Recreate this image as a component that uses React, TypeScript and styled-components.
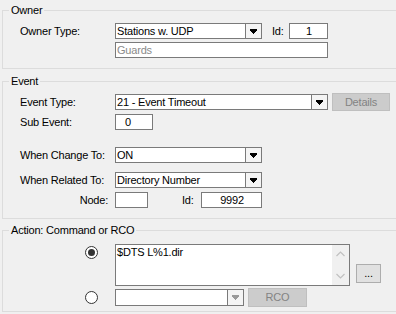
import React from 'react';
import styled, { createGlobalStyle } from 'styled-components';

const Global = createGlobalStyle`
  html, body { margin: 0; padding: 0; background: #f0f0f0; }
  body {
    width: 396px; height: 314px; overflow: hidden;
    font-family: "Liberation Sans", Arial, sans-serif;
    font-size: 11px; color: #000;
    letter-spacing: -0.2px;
  }
`;

const Page = styled.div`
  display: flex;
  flex-direction: column;
  padding: 4px 0 0 2px;
  width: 398px;
`;

const Group = styled.fieldset<{ $mt?: number }>`
  margin: ${p => p.$mt ?? 0}px 0 0 0;
  padding: 0;
  border: 1px solid #dcdcdc;
  min-width: 0;
`;

const Legend = styled.legend`
  margin-left: 6px;
  padding: 0 2px;
  line-height: 13px;
  height: 13px;
`;

const Body = styled.div<{ $pt: number; $pb: number }>`
  display: flex;
  flex-direction: column;
  padding: ${p => p.$pt}px 0 ${p => p.$pb}px 17px;
`;

const Row = styled.div<{ $mt?: number; $h?: number; $align?: string }>`
  display: flex;
  align-items: ${p => p.$align ?? 'center'};
  height: ${p => p.$h ?? 16}px;
  margin-top: ${p => p.$mt ?? 0}px;
`;

const Label = styled.div<{ $w?: number; $right?: boolean; $pr?: number; $ml?: number }>`
  flex: none;
  box-sizing: border-box;
  width: ${p => p.$w ?? 95}px;
  margin-left: ${p => p.$ml ?? 0}px;
  padding-right: ${p => p.$pr ?? 0}px;
  text-align: ${p => (p.$right ? 'right' : 'left')};
  line-height: 13px;
  white-space: nowrap;
`;

const TextBox = styled.div<{ $w: number; $center?: boolean; $pl?: number; $muted?: boolean }>`
  flex: none;
  box-sizing: border-box;
  width: ${p => p.$w}px;
  height: 16px;
  border: 1px solid #7a7a7a;
  background: #fff;
  padding-left: ${p => p.$pl ?? 1}px;
  line-height: 14px;
  text-align: ${p => (p.$center ? 'center' : 'left')};
  color: ${p => (p.$muted ? '#8a8a8a' : '#000')};
  white-space: nowrap;
  overflow: hidden;
`;

const ComboBox = styled.div<{ $w: number; $h?: number }>`
  flex: none;
  box-sizing: border-box;
  width: ${p => p.$w}px;
  height: ${p => p.$h ?? 16}px;
  border: 1px solid #7a7a7a;
  background: #fff;
  display: flex;
`;

const ComboValue = styled.div`
  flex: 1;
  padding-left: 1px;
  line-height: 14px;
  white-space: nowrap;
  overflow: hidden;
`;

const DropButton = styled.div<{ $disabled?: boolean }>`
  flex: none;
  width: 15px;
  border-left: 1px solid #7a7a7a;
  background: #f4f4f4;
  display: flex;
  align-items: center;
  justify-content: center;
`;

const PushButton = styled.div<{ $w: number; $h?: number; $ml?: number; $mt?: number; $disabled?: boolean }>`
  flex: none;
  box-sizing: border-box;
  width: ${p => p.$w}px;
  height: ${p => p.$h ?? 19}px;
  margin-left: ${p => p.$ml ?? 0}px;
  margin-top: ${p => p.$mt ?? 0}px;
  border: 1px solid ${p => (p.$disabled ? '#bfbfbf' : '#adadad')};
  background: ${p => (p.$disabled ? '#cccccc' : '#e1e1e1')};
  color: ${p => (p.$disabled ? '#838383' : '#000')};
  display: flex;
  align-items: center;
  justify-content: center;
  line-height: 13px;
`;

const RadioCell = styled.div<{ $pt?: number }>`
  flex: none;
  width: 95px;
  box-sizing: border-box;
  display: flex;
  justify-content: flex-end;
  padding-right: 17px;
  padding-top: ${p => p.$pt ?? 0}px;
`;

const Radio = styled.div<{ $checked?: boolean }>`
  width: 13px;
  height: 13px;
  box-sizing: border-box;
  border-radius: 50%;
  border: 1px solid #333;
  background: #fff;
  display: flex;
  align-items: center;
  justify-content: center;
  &::after {
    content: '';
    display: ${p => (p.$checked ? 'block' : 'none')};
    width: 7px;
    height: 7px;
    border-radius: 50%;
    background: #333;
  }
`;

const MemoBox = styled.div`
  flex: none;
  box-sizing: border-box;
  width: 235px;
  height: 42px;
  border: 1px solid #7a7a7a;
  background: #fff;
  display: flex;
`;

const MemoText = styled.div`
  flex: 1;
  padding: 1px 0 0 1px;
  line-height: 13px;
`;

const ScrollBar = styled.div`
  flex: none;
  width: 17px;
  background: #f0f0f0;
  display: flex;
  flex-direction: column;
  justify-content: space-between;
  align-items: center;
  padding: 6px 0 6px;
  box-sizing: border-box;
`;

const Arrow = ({ color }: { color: string }) => (
  <svg width="7" height="5" viewBox="0 0 7 5" shapeRendering="crispEdges">
    <rect x="0" y="0" width="7" height="1" fill={color} />
    <rect x="0" y="1" width="7" height="1" fill={color} />
    <rect x="1" y="2" width="5" height="1" fill={color} />
    <rect x="2" y="3" width="3" height="1" fill={color} />
    <rect x="3" y="4" width="1" height="1" fill={color} />
  </svg>
);

const Chevron = ({ up }: { up?: boolean }) => (
  <svg width="9" height="6" viewBox="0 0 9 6">
    <polyline
      points={up ? '0.5,5 4.5,1 8.5,5' : '0.5,1 4.5,5 8.5,1'}
      fill="none"
      stroke="#c0c0c0"
      strokeWidth="1.2"
    />
  </svg>
);

const Combo = ({ w, h, value, disabled }: { w: number; h?: number; value: string; disabled?: boolean }) => (
  <ComboBox $w={w} $h={h}>
    <ComboValue>{value}</ComboValue>
    <DropButton $disabled={disabled}>
      <Arrow color={disabled ? '#9a9a9a' : '#000'} />
    </DropButton>
  </ComboBox>
);

export default function App() {
  return (
    <>
      <Global />
      <Page>
        <Group>
          <Legend>Owner</Legend>
          <Body $pt={6} $pb={10}>
            <Row>
              <Label>Owner Type:</Label>
              <Combo w={147} value="Stations w. UDP" />
              <Label $w={17} $ml={10}>Id:</Label>
              <TextBox $w={39} $center>1</TextBox>
            </Row>
            <Row $mt={3}>
              <Label />
              <TextBox $w={213} $muted>Guards</TextBox>
            </Row>
          </Body>
        </Group>

        <Group $mt={6}>
          <Legend>Event</Legend>
          <Body $pt={5} $pb={10}>
            <Row $h={18}>
              <Label>Event Type:</Label>
              <Combo w={213} value="21 - Event Timeout" />
              <PushButton $w={58} $h={18} $ml={4} $disabled>Details</PushButton>
            </Row>
            <Row $mt={3}>
              <Label>Sub Event:</Label>
              <TextBox $w={38} $pl={9}>0</TextBox>
            </Row>
            <Row $mt={17}>
              <Label>When Change To:</Label>
              <Combo w={147} value="ON" />
            </Row>
            <Row $mt={9}>
              <Label>When Related To:</Label>
              <Combo w={147} value="Directory Number" />
            </Row>
            <Row $mt={4}>
              <Label $right $pr={7}>Node:</Label>
              <TextBox $w={33} />
              <Label $w={19} $ml={34}>Id:</Label>
              <TextBox $w={61} $center>9992</TextBox>
            </Row>
          </Body>
        </Group>

        <Group $mt={5}>
          <Legend>Action: Command or RCO</Legend>
          <Body $pt={7} $pb={4}>
            <Row $h={42} $align="flex-start">
              <RadioCell $pt={2}>
                <Radio $checked />
              </RadioCell>
              <MemoBox>
                <MemoText>$DTS L%1.dir</MemoText>
                <ScrollBar>
                  <Chevron up />
                  <Chevron />
                </ScrollBar>
              </MemoBox>
              <PushButton $w={25} $h={19} $ml={6} $mt={20}>...</PushButton>
            </Row>
            <Row $h={19} $mt={2}>
              <RadioCell>
                <Radio />
              </RadioCell>
              <Combo w={129} h={17} value="" disabled />
              <PushButton $w={59} $h={19} $ml={4} $disabled>RCO</PushButton>
            </Row>
          </Body>
        </Group>
      </Page>
    </>
  );
}
